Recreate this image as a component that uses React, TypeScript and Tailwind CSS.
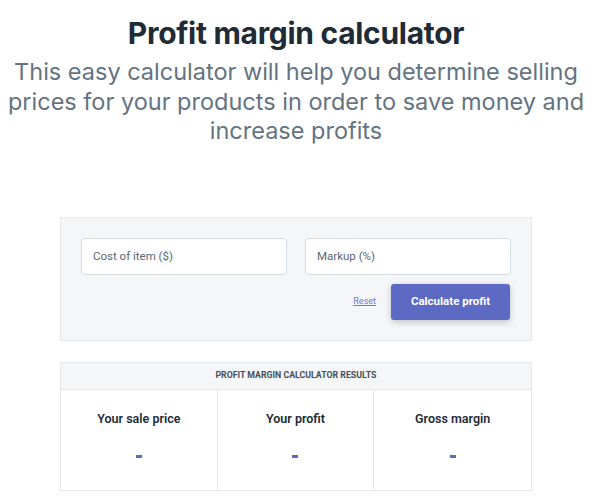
import React from 'react';

const results = ['Your sale price', 'Your profit', 'Gross margin'];

const subtitle = [
  'This easy calculator will help you determine selling',
  'prices for your products in order to save money and',
  'increase profits',
];

const App: React.FC = () => {
  return (
    <div className="w-[592px] bg-white pt-[13px] pb-4 font-['Inter','Liberation_Sans',sans-serif]">
      {/* Heading */}
      <h1 className="text-center text-[30px] font-bold leading-[40px] tracking-[-0.3px] text-[#212b36]">
        Profit margin calculator
      </h1>
      <div className="mt-[4px] text-center text-[23.5px] leading-[29.5px] text-[#637381]">
        {subtitle.map((line) => (
          <p key={line} className="whitespace-nowrap">
            {line}
          </p>
        ))}
      </div>

      {/* Calculator form */}
      <div className="mx-auto mt-[71px] w-[472px] border border-[#e5e8eb] bg-[#f4f6f8] px-[20px] pt-[20px] pb-[20px] font-['Roboto','Liberation_Sans',sans-serif]">
        <div className="flex gap-[18px]">
          <input
            className="h-[37px] w-[206px] rounded-[4px] border border-[#d3dae0] bg-white px-[11px] text-[11.5px] text-[#212b36] placeholder:text-[#5b6672] outline-none"
            placeholder="Cost of item ($)"
          />
          <input
            className="h-[37px] w-[206px] rounded-[4px] border border-[#d3dae0] bg-white px-[11px] text-[11.5px] text-[#212b36] placeholder:text-[#5b6672] outline-none"
            placeholder="Markup (%)"
          />
        </div>
        <div className="mt-[9px] flex items-center justify-end gap-[15px] pr-[1px]">
          <a href="#" className="text-[9px] text-[#6f7cc9] underline">
            Reset
          </a>
          <button className="h-[36px] w-[119px] rounded-[3px] bg-[#5c6ac4] text-[11.5px] font-bold text-white shadow-[0_2px_6px_rgba(33,43,54,0.25)]">
            Calculate profit
          </button>
        </div>
      </div>

      {/* Results */}
      <div className="mx-auto mt-[21px] w-[472px] border border-[#e5e8eb] font-['Roboto','Liberation_Sans',sans-serif]">
        <div className="flex h-[27px] items-center justify-center border-b border-[#e5e8eb] bg-[#f4f6f8] text-[8.75px] font-bold uppercase text-[#454f5b]">
          Profit margin calculator results
        </div>
        <div className="grid grid-cols-3">
          {results.map((label, i) => (
            <div
              key={label}
              className={`flex h-[100px] flex-col items-center pt-[19px] ${i < 2 ? 'border-r border-[#e5e8eb]' : ''}`}
            >
              <div className="text-[12.5px] font-semibold leading-[20px] text-[#212b36]">{label}</div>
              <div className="mt-[26px] h-[3px] w-[6px] bg-[#5c6ac4]" />
            </div>
          ))}
        </div>
      </div>
    </div>
  );
};

export default App;
